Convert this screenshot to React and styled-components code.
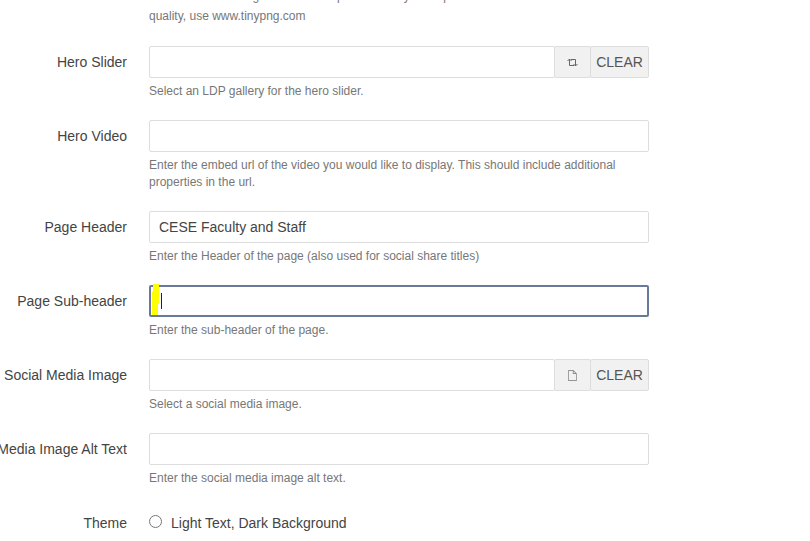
import React, { useState } from "react";
import styled, { createGlobalStyle } from "styled-components";
import { TfiFile } from "react-icons/tfi";

const GlobalStyle = createGlobalStyle`
  * {
    box-sizing: border-box;
  }
  body {
    margin: 0;
    background: #fff;
    color: #444;
    font-family: "Liberation Sans", Arial, sans-serif;
    font-size: 14px;
  }
`;

const Page = styled.main`
  height: 100vh;
  overflow: hidden;
`;

// the form is scrolled part of the way down
const Form = styled.form`
  display: flex;
  flex-direction: column;
  gap: 20px;
  margin-top: -14px;
`;

const Row = styled.div`
  display: grid;
  grid-template-columns: 127px minmax(0, 500px);
  column-gap: 22px;
`;

const LabelCell = styled.div`
  display: flex;
  justify-content: flex-end;
  line-height: 32px;
  white-space: nowrap;
`;

const Field = styled.div`
  grid-column: 2;
`;

const Control = styled.div`
  position: relative;
  display: flex;
  height: 32px;
  margin-bottom: 5px;
`;

const TextInput = styled.input`
  flex: 1;
  min-width: 0;
  padding: 0 9px;
  border: ${(props) => (props.$active ? "2px solid #687a99" : "1px solid #ddd")};
  border-radius: 2px;
  outline: none;
  background: #fff;
  color: #444;
  font: inherit;
`;

const AddonButton = styled.button`
  display: flex;
  align-items: center;
  justify-content: center;
  width: ${(props) => (props.$wide ? "59px" : "37px")};
  margin-left: -1px;
  padding: 0;
  border: 1px solid #ddd;
  border-radius: 2px;
  background: #f1f1f1;
  color: #555;
  font: inherit;
`;

const Highlight = styled.span`
  position: absolute;
  top: -1px;
  left: 3px;
  width: 7px;
  height: 31px;
  background: #ff0;
  clip-path: polygon(14% 0, 100% 0, 100% 64%, 86% 64%, 86% 100%, 0 100%, 0 24%, 14% 24%);
`;

const Caret = styled.span`
  position: absolute;
  top: 8px;
  left: 12px;
  width: 1px;
  height: 16px;
  background: #222;
`;

const Help = styled.p`
  margin: 0;
  color: #777;
  font-size: 12px;
  line-height: ${(props) => (props.$loose ? "20px" : "17px")};
`;

const RadioOption = styled.label`
  display: flex;
  align-items: center;
  gap: 9px;
  height: 32px;
`;

const Radio = styled.input`
  width: 13px;
  height: 13px;
  margin: 0 0 3px;
`;

const LoopIcon = () => (
  <svg width="11" height="9" viewBox="0 0 11 9" fill="none" stroke="#666" strokeWidth="1">
    <path d="M2.5 1v6.5H7M4 1.5h4.5V8" />
    <path d="M0.5 3l2-2 2 2M6.5 6l2 2 2-2" />
  </svg>
);

const FormRow = ({ id, label, help, value = "", active, icon }) => {
  const [text, setText] = useState(value);

  return (
    <Row>
      <LabelCell>
        <label htmlFor={id}>{label}</label>
      </LabelCell>
      <Field>
        <Control>
          <TextInput
            id={id}
            type="text"
            value={text}
            $active={active}
            onChange={(e) => setText(e.target.value)}
          />
          {icon && (
            <>
              <AddonButton type="button" aria-label="Browse">{icon}</AddonButton>
              <AddonButton type="button" $wide onClick={() => setText("")}>CLEAR</AddonButton>
            </>
          )}
          {active && (
            <>
              <Highlight />
              <Caret />
            </>
          )}
        </Control>
        <Help>{help}</Help>
      </Field>
    </Row>
  );
};

const App = () => {
  return (
    <Page>
      <GlobalStyle />
      <Form>
        <Row>
          <Field>
            <Help $loose>
              Select the hero image. In order to optimize clarity and uphold the best visual
              <br />
              quality, use www.tinypng.com
            </Help>
          </Field>
        </Row>
        <FormRow
          id="heroSlider"
          label="Hero Slider"
          help="Select an LDP gallery for the hero slider."
          icon={<LoopIcon />}
        />
        <FormRow
          id="heroVideo"
          label="Hero Video"
          help="Enter the embed url of the video you would like to display. This should include additional properties in the url."
        />
        <FormRow
          id="pageHeader"
          label="Page Header"
          value="CESE Faculty and Staff"
          help="Enter the Header of the page (also used for social share titles)"
        />
        <FormRow
          id="pageSubHeader"
          label="Page Sub-header"
          help="Enter the sub-header of the page."
          active
        />
        <FormRow
          id="socialImage"
          label="Social Media Image"
          help="Select a social media image."
          icon={<TfiFile size={11} color="#777" />}
        />
        <FormRow
          id="socialImageAlt"
          label="Social Media Image Alt Text"
          help="Enter the social media image alt text."
        />
        <Row role="radiogroup" aria-labelledby="themeLabel">
          <LabelCell id="themeLabel">Theme</LabelCell>
          <Field>
            <RadioOption>
              <Radio type="radio" name="theme" value="light" />
              Light Text, Dark Background
            </RadioOption>
          </Field>
        </Row>
      </Form>
    </Page>
  );
};

export default App;
